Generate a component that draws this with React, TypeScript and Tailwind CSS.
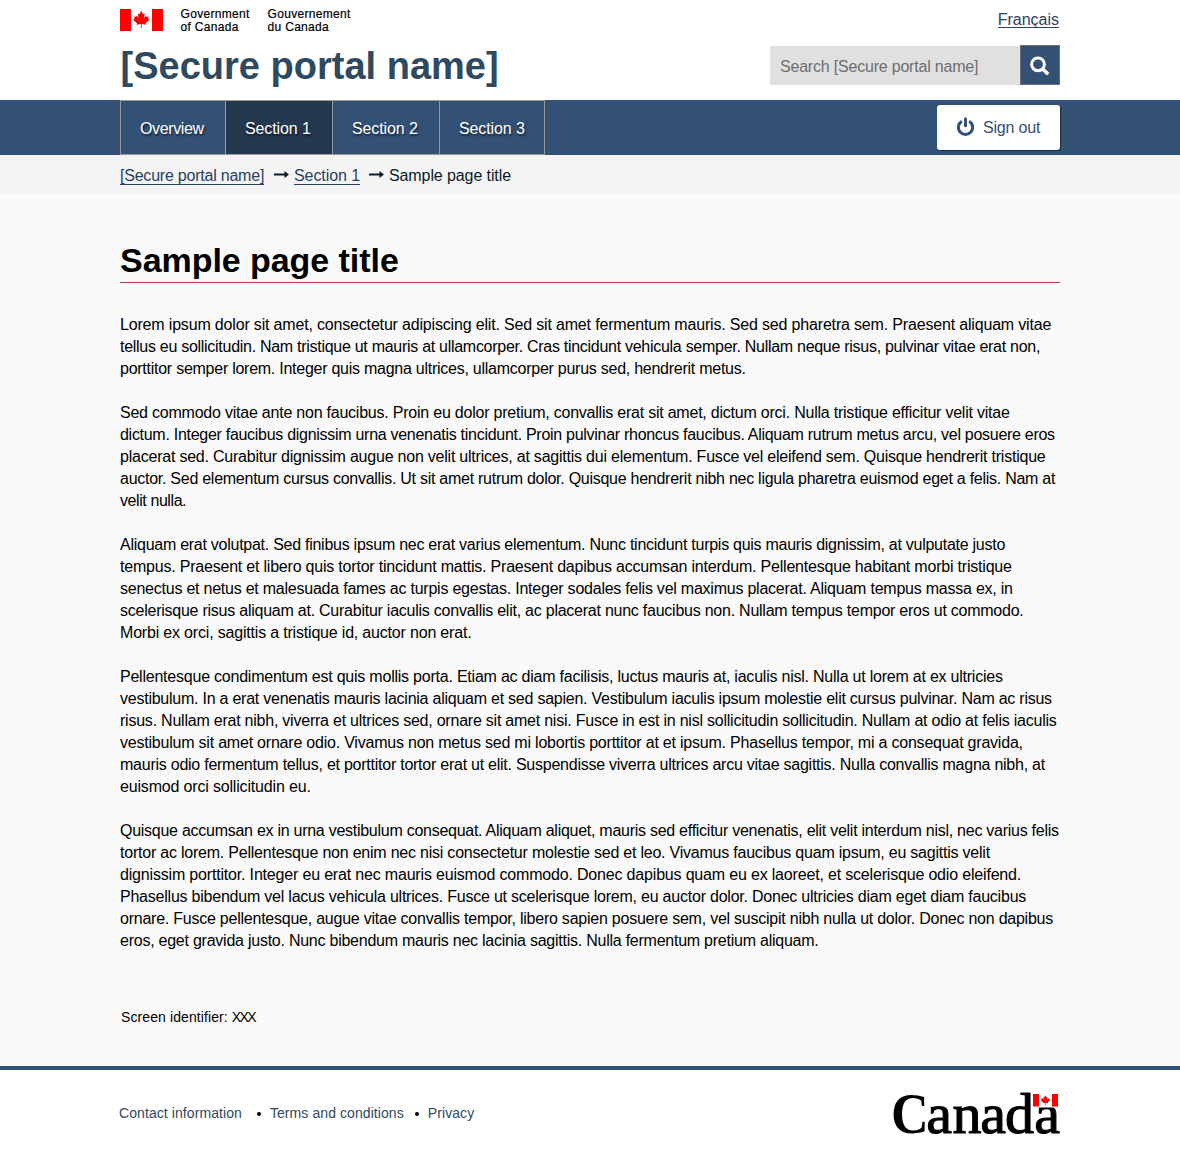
import React from 'react';

// Each line carries the number of pixels by which its tracking is tightened.
type Line = [text: string, tighten: number];

const paragraphs: Line[][] = [
  [
    ['Lorem ipsum dolor sit amet, consectetur adipiscing elit. Sed sit amet fermentum mauris. Sed sed pharetra sem. Praesent aliquam vitae', 23],
    ['tellus eu sollicitudin. Nam tristique ut mauris at ullamcorper. Cras tincidunt vehicula semper. Nullam neque risus, pulvinar vitae erat non,', 39.5],
    ['porttitor semper lorem. Integer quis magna ultrices, ullamcorper purus sed, hendrerit metus.', 23.5],
  ],
  [
    ['Sed commodo vitae ante non faucibus. Proin eu dolor pretium, convallis erat sit amet, dictum orci. Nulla tristique efficitur velit vitae', 30.5],
    ['dictum. Integer faucibus dignissim urna venenatis tincidunt. Proin pulvinar rhoncus faucibus. Aliquam rutrum metus arcu, vel posuere eros', 39],
    ['placerat sed. Curabitur dignissim augue non velit ultrices, at sagittis dui elementum. Fusce vel eleifend sem. Quisque hendrerit tristique', 30.5],
    ['auctor. Sed elementum cursus convallis. Ut sit amet rutrum dolor. Quisque hendrerit nibh nec ligula pharetra euismod eget a felis. Nam at', 36],
    ['velit nulla.', 5],
  ],
  [
    ['Aliquam erat volutpat. Sed finibus ipsum nec erat varius elementum. Nunc tincidunt turpis quis mauris dignissim, at vulputate justo', 34.5],
    ['tempus. Praesent et libero quis tortor tincidunt mattis. Praesent dapibus accumsan interdum. Pellentesque habitant morbi tristique', 27],
    ['senectus et netus et malesuada fames ac turpis egestas. Integer sodales felis vel maximus placerat. Aliquam tempus massa ex, in', 29.5],
    ['scelerisque risus aliquam at. Curabitur iaculis convallis elit, ac placerat nunc faucibus non. Nullam tempus tempor eros ut commodo.', 32],
    ['Morbi ex orci, sagittis a tristique id, auctor non erat.', 10.5],
  ],
  [
    ['Pellentesque condimentum est quis mollis porta. Etiam ac diam facilisis, luctus mauris at, iaculis nisl. Nulla ut lorem at ex ultricies', 30.5],
    ['vestibulum. In a erat venenatis mauris lacinia aliquam et sed sapien. Vestibulum iaculis ipsum molestie elit cursus pulvinar. Nam ac risus', 33],
    ['risus. Nullam erat nibh, viverra et ultrices sed, ornare sit amet nisi. Fusce in est in nisl sollicitudin sollicitudin. Nullam at odio at felis iaculis', 34.5],
    ['vestibulum sit amet ornare odio. Vivamus non metus sed mi lobortis porttitor at et ipsum. Phasellus tempor, mi a consequat gravida,', 28],
    ['mauris odio fermentum tellus, et porttitor tortor erat ut elit. Suspendisse viverra ultrices arcu vitae sagittis. Nulla convallis magna nibh, at', 35.5],
    ['euismod orci sollicitudin eu.', 5],
  ],
  [
    ['Quisque accumsan ex in urna vestibulum consequat. Aliquam aliquet, mauris sed efficitur venenatis, elit velit interdum nisl, nec varius felis', 37.5],
    ['tortor ac lorem. Pellentesque non enim nec nisi consectetur molestie sed et leo. Vivamus faucibus quam ipsum, eu sagittis velit', 28],
    ['dignissim porttitor. Integer eu erat nec mauris euismod commodo. Donec dapibus quam eu ex laoreet, et scelerisque odio eleifend.', 23],
    ['Phasellus bibendum vel lacus vehicula ultrices. Fusce ut scelerisque lorem, eu auctor dolor. Donec ultricies diam eget diam faucibus', 29.5],
    ['ornare. Fusce pellentesque, augue vitae convallis tempor, libero sapien posuere sem, vel suscipit nibh nulla ut dolor. Donec non dapibus', 32],
    ['eros, eget gravida justo. Nunc bibendum mauris nec lacinia sagittis. Nulla fermentum pretium aliquam.', 24.5],
  ],
];

const leaf =
  'M10 0 L12.2 4.1 L14.2 3 L13.2 8.2 L15.8 5.4 L16.4 7 L19 6.5 L18.1 9.2 L20 10.2 L15.1 14.2 L15.7 16 L10.5 15.3 L10.5 20 L9.5 20 L9.5 15.3 L4.3 16 L4.9 14.2 L0 10.2 L1.9 9.2 L1 6.5 L3.6 7 L4.2 5.4 L6.8 8.2 L5.8 3 L7.8 4.1 Z';

function Flag() {
  return (
    <svg className="mt-px block h-[22px] w-[43px]" viewBox="0 0 43 22">
      <rect width="11" height="22" fill="#f00" />
      <rect x="32" width="11" height="22" fill="#f00" />
      <path d={leaf} fill="#f00" transform="translate(13 1.8) scale(.83 .87)" />
    </svg>
  );
}

function Wordmark() {
  return (
    <svg className="block h-[68px] w-[172px]" viewBox="0 0 172 68" role="img">
      <g fontFamily="'Liberation Serif', serif" fontSize="58">
        <text y="53" x="-1.2" fontWeight="700" transform="scale(.9 1)">
          C
        </text>
        <text y="53" x="34.2 60.4 88.2 113 142.2" stroke="#000" strokeWidth="1.1">
          anada
        </text>
      </g>
      <rect x="139.5" y="12" width="28" height="15.5" fill="#fff" />
      <rect x="141" y="14" width="6" height="12.5" fill="#f00" />
      <rect x="160" y="14" width="6" height="12.5" fill="#f00" />
      <path d={leaf} fill="#f00" transform="translate(148.6 15.2) scale(.48 .5)" />
    </svg>
  );
}

function Arrow() {
  return (
    <svg className="block h-[9px] w-[15px]" viewBox="0 0 15 9">
      <path d="M0 3.5h10.5V1L15 4.5 10.5 8V5.5H0z" fill="#0b1c2c" />
    </svg>
  );
}

const tab =
  'flex h-[55px] items-center border border-[#999] pt-0.5 pl-[19px] text-white [text-shadow:1px_2px_2px_rgba(0,0,0,0.55)]';

export default function App() {
  return (
    <div className="h-[1158px] w-[1180px] overflow-hidden bg-white font-['Liberation_Sans',Arial,sans-serif] text-[16px] leading-[22px] text-black">
      <header className="mx-auto flex h-[100px] w-[940px] justify-between">
        <div>
          <div className="flex h-[34px] pt-2 text-[12px] leading-[13px] [-webkit-text-stroke:0.2px_#000]">
            <Flag />
            <div className="ml-[17.6px] w-[87px] whitespace-nowrap tracking-[0.3px]">
              Government
              <br />
              of Canada
            </div>
            <div className="whitespace-nowrap tracking-[0.3px]">
              Gouvernement
              <br />
              du Canada
            </div>
          </div>
          <div className="mt-[10px] ml-[0.6px] whitespace-nowrap text-[38px] leading-[44px] font-bold text-[#2f495e]">
            [Secure portal name]
          </div>
        </div>
        <div className="flex w-[290px] flex-col">
          <a className="mt-[10px] mr-px flex h-[18px] items-center self-end border-b border-[#2b4380] pt-[2px] text-[#284162]">
            Français
          </a>
          <div className="mt-[17px] flex items-end">
            <div className="flex h-[39px] w-[250px] items-center bg-[#e0e0e0] pt-0.5 pl-[10px] tracking-[-0.2px] text-[#6e6e6e]">
              Search [Secure portal name]
            </div>
            <div className="flex h-10 w-10 items-center justify-center border border-[#6e6e6e] bg-[#335075] pt-0.5">
              <svg className="h-5 w-5" viewBox="0 0 20 20" fill="none" stroke="#fff">
                <circle cx="8" cy="8.3" r="6.4" strokeWidth="3" />
                <path d="M12.8 13 18.2 18.2" strokeWidth="3.6" />
              </svg>
            </div>
          </div>
        </div>
      </header>

      <nav className="h-[55px] bg-[#335075]">
        <div className="mx-auto flex w-[940px]">
          <a className={`${tab} w-[106px] tracking-[-0.38px]`}>Overview</a>
          <a className={`${tab} -ml-px w-[108px] bg-[#243850] tracking-[-0.1px]`}>Section 1</a>
          <a className={`${tab} -ml-px w-[108px] tracking-[-0.1px]`}>Section 2</a>
          <a className={`${tab} -ml-px w-[106px] tracking-[-0.1px]`}>Section 3</a>
          <button className="mt-[5px] ml-auto flex h-[45px] w-[123px] items-center rounded-[3px] bg-white pl-5 text-[#335075] shadow-[1px_1px_0_#172b40]">
            <svg className="mb-[3px] h-[19px] w-[17px]" viewBox="0 0 17 19" fill="none" stroke="#335075" strokeWidth="3">
              <path d="M4.8 4.3a7.1 7.1 0 1 0 7.4 0" />
              <path d="M8.5 1.8v6.9" strokeLinecap="round" />
            </svg>
            <span className="ml-[9px] tracking-[-0.18px]">Sign out</span>
          </button>
        </div>
      </nav>

      <div className="h-[39px] bg-[#f4f4f4]">
        <div className="mx-auto flex w-[940px] items-start whitespace-nowrap pt-3">
          <a className="w-[144px] border-b border-[#284162] leading-[17px] tracking-[-0.22px] text-[#284162]">[Secure portal name]</a>
          <div className="mt-[3px] ml-[10px]">
            <Arrow />
          </div>
          <a className="ml-[5px] w-[66px] border-b border-[#284162] leading-[17px] tracking-[-0.08px] text-[#284162]">Section 1</a>
          <div className="mt-[3px] ml-[9px]">
            <Arrow />
          </div>
          <span className="ml-[5px] leading-[17px] tracking-[-0.1px] text-[#0b1c2c]">Sample page title</span>
        </div>
      </div>

      <main className="h-[872px] bg-[#f9f9f9]">
        <div className="mx-auto w-[940px]">
          <h1 className="h-[89px] border-b border-[#af3c43] pt-[46px] text-[34px] leading-[40px] font-bold tracking-[-0.05px]">
            Sample page title
          </h1>
          <div className="flex flex-col gap-[22px] pt-[31px]">
            {paragraphs.map((lines, i) => (
              <p key={i}>
                {lines.map(([text, tighten]) => (
                  <span
                    key={text}
                    className="block whitespace-nowrap"
                    style={{ letterSpacing: `${-tighten / text.length}px` }}
                  >
                    {text}
                  </span>
                ))}
              </p>
            ))}
          </div>
          <div className="mt-[54px] pl-px text-[14px] tracking-[0.1px]">
            Screen identifier: <span className="tracking-[-1.6px]">XXX</span>
          </div>
        </div>
      </main>

      <footer className="border-t-4 border-[#335075] bg-white">
        <div className="mx-auto flex w-[940px] justify-between">
          <div className="mt-8 -ml-px flex h-[22px] items-center whitespace-nowrap text-[14px] tracking-[0.08px] text-[#2f495e]">
            <a>Contact information</a>
            <i className="mt-px ml-[15.5px] h-1 w-1 rounded-full bg-black" />
            <a className="ml-[8.5px]">Terms and conditions</a>
            <i className="mt-px ml-[11.5px] h-1 w-1 rounded-full bg-black" />
            <a className="ml-[8.5px]">Privacy</a>
          </div>
          <div className="-mr-1 mt-[10px]">
            <Wordmark />
          </div>
        </div>
      </footer>
    </div>
  );
}
